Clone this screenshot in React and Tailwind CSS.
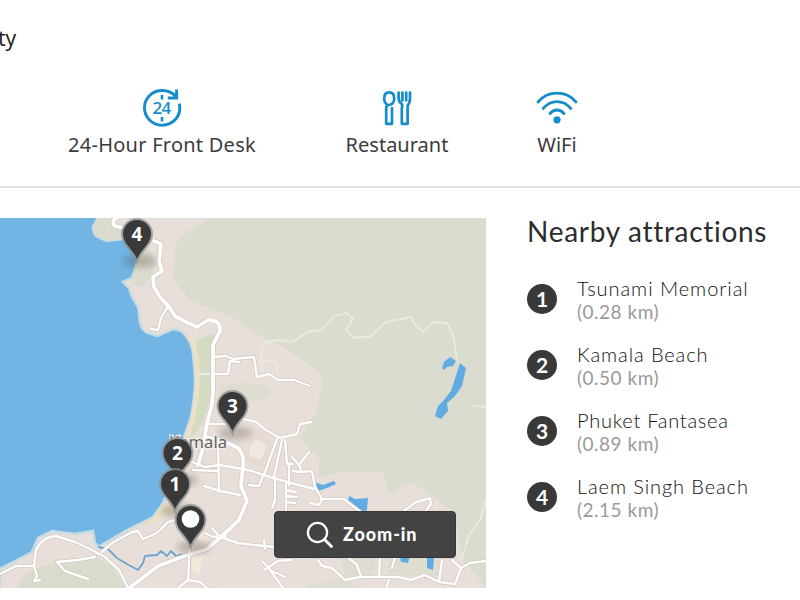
import React from "react";

const LAND =
  "M98 217 L93 227 Q93 235 98 237 L107 241 L123 239 L134 246 Q138 257 137 263 L132 278 L123 282 L129 288 L132 297 L138 307 L140 323 Q142 331 148 333 L157 336 Q165 333 173 329 Q182 330 185 335 Q192 343 193 354 L195 377 Q195 400 190 420 L183 440 L172 482 L163 503 L153 517 L127 530 L98 547 L95 543 L93 531 L75 534 L52 531 L38 538 L32 552 L0 569 L0 590 L488 590 L488 217 Z";

const MAIN_ROADS = [
  "M154 241 L161 244 L159 261 L162 271 L153 277 L154 287 L160 297 L170 308 L175 316 L184 321 L197 327 L208 320 Q221 320 220 331 L213 345 L213 390 L212 404 L206 428 L204 445 L198 465",
  "M118 217 Q110 222 115 226 L128 229",
  "M206 437 L222 440 L238 448 Q245 456 243 466 L241 486 L247 501 L239 520 L222 536 L207 549 L185 556 L158 566 L128 589",
];

const ROADS = [
  "M167 308 L161 318 L158 330 L151 329",
  "M0 574 L16 566 L34 566 L36 550 Q42 537 56 536 L75 542 L90 549 L105 557 L119 570 L128 588",
  "M34 566 L37 576 L34 581 L40 580",
  "M95 557 L78 560 L57 562 L65 571 L88 579",
  "M102 552 L112 543 L132 532 L138 531 L143 539 L157 533 L168 522 L179 519",
  "M213 357 L226 356 L233 359 L254 357 L257 377 L269 374 L278 380 L294 380 L310 386",
  "M214 374 L228 374 L230 361 L239 362",
  "M206 424 L226 424 M244 419 L256 422 L266 430 L280 438 L297 434 L300 424 L311 422",
  "M192 462 L205 467 L220 465 L243 469 L252 471 L270 477 L291 483 L315 489",
  "M204 486 L220 491 L240 495 M218 440 L219 492 M193 470 L218 471",
  "M205 533 L213 537 L226 536 M212 528 L220 537 L238 543 L254 545 L275 547",
  "M277 439 L264 475 M282 440 L274 477 M285 440 L287 464 L293 464 M289 463 L289 485",
  "M292 457 L299 465 L309 452 M299 465 L302 472 L312 471 L315 487 L322 499 M293 471 L300 472",
  "M275 479 L275 500 L272 508",
  "M286 483 L286 512 M286 490 L296 492 M286 496 L297 497 M286 502 L295 503 M263 476 L259 486 L249 485",
  "M322 499 L344 499 L358 510 L364 514 M322 499 L319 505 L310 503",
  "M190 548 L189 560 L188 580 L177 589 M188 580 L200 582 L208 589",
  "M262 561 L268 567 L283 588 M264 570 L278 561 L291 560 M270 570 L285 577",
  "M318 560 L322 566 L332 568 L345 580 L360 577 L398 577 L411 580 L425 575 L439 582 L442 560 M361 577 L357 565 L349 558",
  "M439 582 L455 584 L461 568 L452 560 M461 568 L470 563 L486 561",
  "M380 558 L379 576 M389 580 L386 589 M392 568 L395 557 M264 540 L265 549",
  "M404 511 L416 502 L430 498 L431 504 L424 513",
];

const TRAILS = [
  "M260 356 L265 342 L280 340 L292 342 L308 332 L321 330 L334 316 L346 313 L353 319 L346 330 L354 338 L371 336 L386 322 L411 317 L416 326 L423 332 L433 322 L447 323 L454 338 L457 360",
  "M474 406 L486 407 M486 500 L480 520 L469 535 L462 558",
  "M261 357 L262 370 M263 361 L276 361 L277 373 M199 374 L211 374",
];

function PinShape({ x, y, label }) {
  return (
    <g transform={`translate(${x} ${y})`}>
      <ellipse cx="3" cy="25" rx="17" ry="7" fill="#514a40" opacity=".28" filter="url(#soft)" />
      <path
        d="M0 23 C-4 13 -14 8 -14 -2 A14 14 0 1 1 14 -2 C14 8 4 13 0 23Z"
        fill="#393939"
        stroke="#8d8d8b"
        strokeOpacity=".75"
        strokeWidth="4"
        paintOrder="stroke"
      />
      {label ? (
        <text y="5" textAnchor="middle" fontFamily="Open Sans, sans-serif" fontWeight="700" fontSize="19" fill="#fff">
          {label}
        </text>
      ) : (
        <circle cx="0" cy="-3" r="8.8" fill="#fff" />
      )}
    </g>
  );
}

function MapDrawing() {
  return (
    <svg className="block h-[370px] w-[486px]" viewBox="0 218 486 370" fill="none">
      <defs>
        <filter id="soft" x="-50%" y="-100%" width="200%" height="300%">
          <feGaussianBlur stdDeviation="3" />
        </filter>
        <clipPath id="land">
          <path d={LAND} />
        </clipPath>
      </defs>
      <rect x="0" y="218" width="486" height="370" fill="#72b4e4" />
      <path d={LAND} fill="#e9dfda" stroke="#c4dde4" strokeWidth="2.5" />
      <g clipPath="url(#land)">
        <path d="M212 217 Q193 230 183 235 Q174 240 175 260 L173 280 L190 300 L233 318 L262 337 L283 347 L320 372 L322 384 L317 410 L300 438 L320 460 L318 478 L343 472 L383 472 L389 494 L413 483 L433 497 L453 512 L463 560 L488 590 L488 217Z" fill="#dadccf" />
        <path d="M92 217 L116 217 L127 240 L150 250 L156 264 L152 277 L143 287 L130 285 L137 263 L132 244 L93 243Z" fill="#dadccf" />
        <path d="M196 340 L214 334 L212 392 L202 425 L190 440 L195 400Z" fill="#d3dbc0" />
        <path d="M183 330 Q192 343 193 354 L195 377 Q195 400 190 420 L181 448 L186 448 L196 415 L200 385 L199 358 L194 340Z" fill="#ebe0c6" />
        <path d="M139 262 L134 280 L126 282 L131 285 L142 264Z M163 503 L153 518 L133 530 L160 520 L176 508Z" fill="#ebe0c6" />
        <path d="M15 590 L26 573 L60 560 L95 557 L112 566 L128 590Z" fill="#d9dccd" />
        <path d="M220 388 L238 382 L262 384 L272 392 L262 401 L235 399 L220 396Z M308 584 L345 578 L362 590 L308 590Z M388 548 L440 550 L438 576 L388 574Z M338 540 L380 545 L372 575 L345 577Z" fill="#dadccf" opacity=".7" />
        <path d="M248 439 L258 428 L272 444 L262 467 L246 462Z" fill="#e6dad3" />
        <path d="M250 446 L257 439 L267 446 L261 460 L250 456Z" fill="#eee8e3" />
        <path d="M192 550 L203 557 L199 575 L192 571Z M196 535 L203 530 L209 540 L202 544Z" fill="#f3e9d8" />
      </g>
      <g stroke="#e9ebdf" strokeWidth="1.8" strokeLinejoin="round" strokeLinecap="round">
        {TRAILS.map((d) => (
          <path key={d} d={d} />
        ))}
      </g>
      <g fill="#61abe2">
        <path d="M442 368 L444 362 L450 357 L456 361 L453 366 L447 367 L444 370Z M460 363 L466 368 L462 386 L455 396 L447 403 L448 411 L441 419 L435 416 L438 406 L444 400 L451 391Z" />
        <path d="M314 482 L323 485 L334 481 L336 484 L327 488 L318 491Z M349 496 L355 499 L368 498 L367 510 L364 514 L348 501Z" />
        <path d="M400 556 L410 556 L408 563 L401 562Z M427 558 L434 558 L433 570 L427 568Z" />
      </g>
      <path d="M98 547 L108 549 L117 558 L127 564 L138 570 L143 563 L145 556 L157 555 L161 551 L167 556 L171 551 L176 556 L182 554" stroke="#6ba6cf" strokeWidth="1.8" strokeLinejoin="round" />
      <g strokeLinejoin="round" strokeLinecap="round">
        <g stroke="#d0c7c1" strokeWidth="3.8">
          {ROADS.map((d) => (
            <path key={d} d={d} />
          ))}
        </g>
        <g stroke="#d0c7c1" strokeWidth="5.2">
          {MAIN_ROADS.map((d) => (
            <path key={d} d={d} />
          ))}
        </g>
        <g stroke="#fff" strokeWidth="2.4">
          {ROADS.map((d) => (
            <path key={d} d={d} />
          ))}
        </g>
        <g stroke="#fff" strokeWidth="3.8">
          {MAIN_ROADS.map((d) => (
            <path key={d} d={d} />
          ))}
        </g>
      </g>
      <text x="169" y="448" fontFamily="Noto Sans, sans-serif" fontSize="16.5" fill="#666461" stroke="#f3eeea" strokeWidth="2.5" paintOrder="stroke" textLength="58">
        Kamala
      </text>
      <PinShape x={137} y={236} label="4" />
      <PinShape x={232.5} y={408} label="3" />
      <PinShape x={177.5} y={455} label="2" />
      <PinShape x={175} y={486} label="1" />
      <PinShape x={190.5} y={522} />
    </svg>
  );
}

function FrontDeskIcon() {
  return (
    <svg className="h-10 w-10" viewBox="0 0 40 40" fill="none" stroke="#158dca" strokeWidth="3">
      <path d="M37.2 15.7 C40 28 31 37.2 20 37.2 C10 37.2 2.5 29 2.5 19.8 C2.5 10 10.5 2.6 20 2.6 C26 2.6 31 5 34 9" />
      <path d="M34.6 1.5 V10 H25.8" />
      <path d="M20 7 V11.5 M20 29 V33.5" strokeWidth="2.6" />
      <text x="20" y="26" textAnchor="middle" fontFamily="Open Sans, sans-serif" fontSize="17" fontWeight="600" fill="#158dca" stroke="none" textLength="19">
        24
      </text>
    </svg>
  );
}

function RestaurantIcon() {
  return (
    <svg className="h-10 w-10" viewBox="0 0 40 40" fill="none" stroke="#158dca" strokeWidth="2.7" strokeLinejoin="round" strokeLinecap="round">
      <path d="M9.2 19.2 V35.8 H15 V20.2 M9.2 19.2 L11 17.2 C8.5 16 7.2 13.3 7.2 10.5 C7.2 6.5 9 4.4 12.2 4.4 C15.4 4.4 17.2 6.5 17.2 10.5 C17.2 13.5 15.5 16 13.3 16.6" />
      <path d="M21.6 4.6 V10 C21.6 13.5 23 15 25.2 16.4 V19.4 H24.8 V35.8 H30.6 V17.6 C32.4 15.5 33 13.5 33 10 V4.6 M25.4 4.6 V12.4 M29.2 4.6 V12.4" />
    </svg>
  );
}

function WifiIcon() {
  return (
    <svg className="h-10 w-[42px]" viewBox="0 0 42 40" fill="none" stroke="#158dca" strokeWidth="2.8" strokeLinecap="round">
      <path d="M2 14 C12 2.2 30 2.2 40 14 M7.2 20.5 C15 11.3 27 11.3 34.8 20.5 M14 25.5 C18 20.8 24 20.8 28 25.5" />
      <circle cx="21" cy="31.8" r="3.6" fill="#158dca" stroke="none" />
    </svg>
  );
}

function Amenity({ icon, label, className }) {
  return (
    <div className={`flex shrink-0 flex-col items-center ${className}`}>
      {icon}
      <span className="mt-[5px] whitespace-nowrap font-['Noto_Sans',sans-serif] text-[20px] leading-6 text-[#3c3c3c]">{label}</span>
    </div>
  );
}

const ATTRACTIONS = [
  { name: "Tsunami Memorial", distance: "0.28 km", spacing: "tracking-[0.95px]" },
  { name: "Kamala Beach", distance: "0.50 km", spacing: "tracking-[0.9px]" },
  { name: "Phuket Fantasea", distance: "0.89 km", spacing: "tracking-[0.75px]" },
  { name: "Laem Singh Beach", distance: "2.15 km", spacing: "tracking-[0.9px]" },
];

export default function App() {
  return (
    <div className="flex h-[600px] w-[800px] flex-col overflow-hidden bg-white">
      <header className="h-[88px] pt-6">
        <div className="-ml-[2px] font-['Noto_Sans',sans-serif] text-[21px] leading-7 text-[#222]">ty</div>
      </header>
      <section className="flex h-[98px] items-start">
        <Amenity className="ml-[62px] w-[200px] tracking-[0.25px]" icon={<FrontDeskIcon />} label="24-Hour Front Desk" />
        <Amenity className="ml-[75px] w-[120px]" icon={<RestaurantIcon />} label="Restaurant" />
        <Amenity className="ml-[60px] w-[80px]" icon={<WifiIcon />} label="WiFi" />
      </section>
      <main className="flex flex-1 border-t-2 border-[#e3e3e3] pt-[30px]">
        <div className="relative h-[370px] w-[486px] shrink-0">
          <MapDrawing />
          <button className="absolute left-[274px] top-[293px] flex h-[47px] w-[182px] items-center rounded-[4px] border border-[#373737] bg-[#434343] pl-[31px] text-white">
            <svg className="h-7 w-7 shrink-0" viewBox="0 0 28 28" fill="none" stroke="white" strokeWidth="2.3" strokeLinecap="round">
              <circle cx="11.5" cy="11.5" r="9.6" />
              <path d="M18.5 18.5 L25.5 25.5" strokeWidth="2.8" />
            </svg>
            <span className="-mt-[2px] ml-[9px] whitespace-nowrap font-[Lato,sans-serif] text-[18px] font-black leading-6 tracking-[0.9px]">Zoom-in</span>
          </button>
        </div>
        <aside className="ml-[41px] font-[Lato,sans-serif]">
          <h2 className="-mt-[6px] whitespace-nowrap text-[28px] leading-[38px] tracking-[0.7px] text-[#2c2c2c]">Nearby attractions</h2>
          <ol className="mt-[26px]">
            {ATTRACTIONS.map((item, index) => (
              <li key={item.name} className="flex h-[66px] items-start">
                <span className="mt-[8px] flex h-[30px] w-[30px] items-center justify-center rounded-full bg-[#393939] pb-[2px] text-[21px] font-bold leading-none text-white">
                  {index + 1}
                </span>
                <span className="ml-5 whitespace-nowrap">
                  <span className={`block text-[20px] font-light leading-6 text-[#111] ${item.spacing}`}>{item.name}</span>
                  <span className="block text-[19px] leading-[23px] tracking-[0.5px] text-[#9a9a9a]">({item.distance})</span>
                </span>
              </li>
            ))}
          </ol>
        </aside>
      </main>
    </div>
  );
}
